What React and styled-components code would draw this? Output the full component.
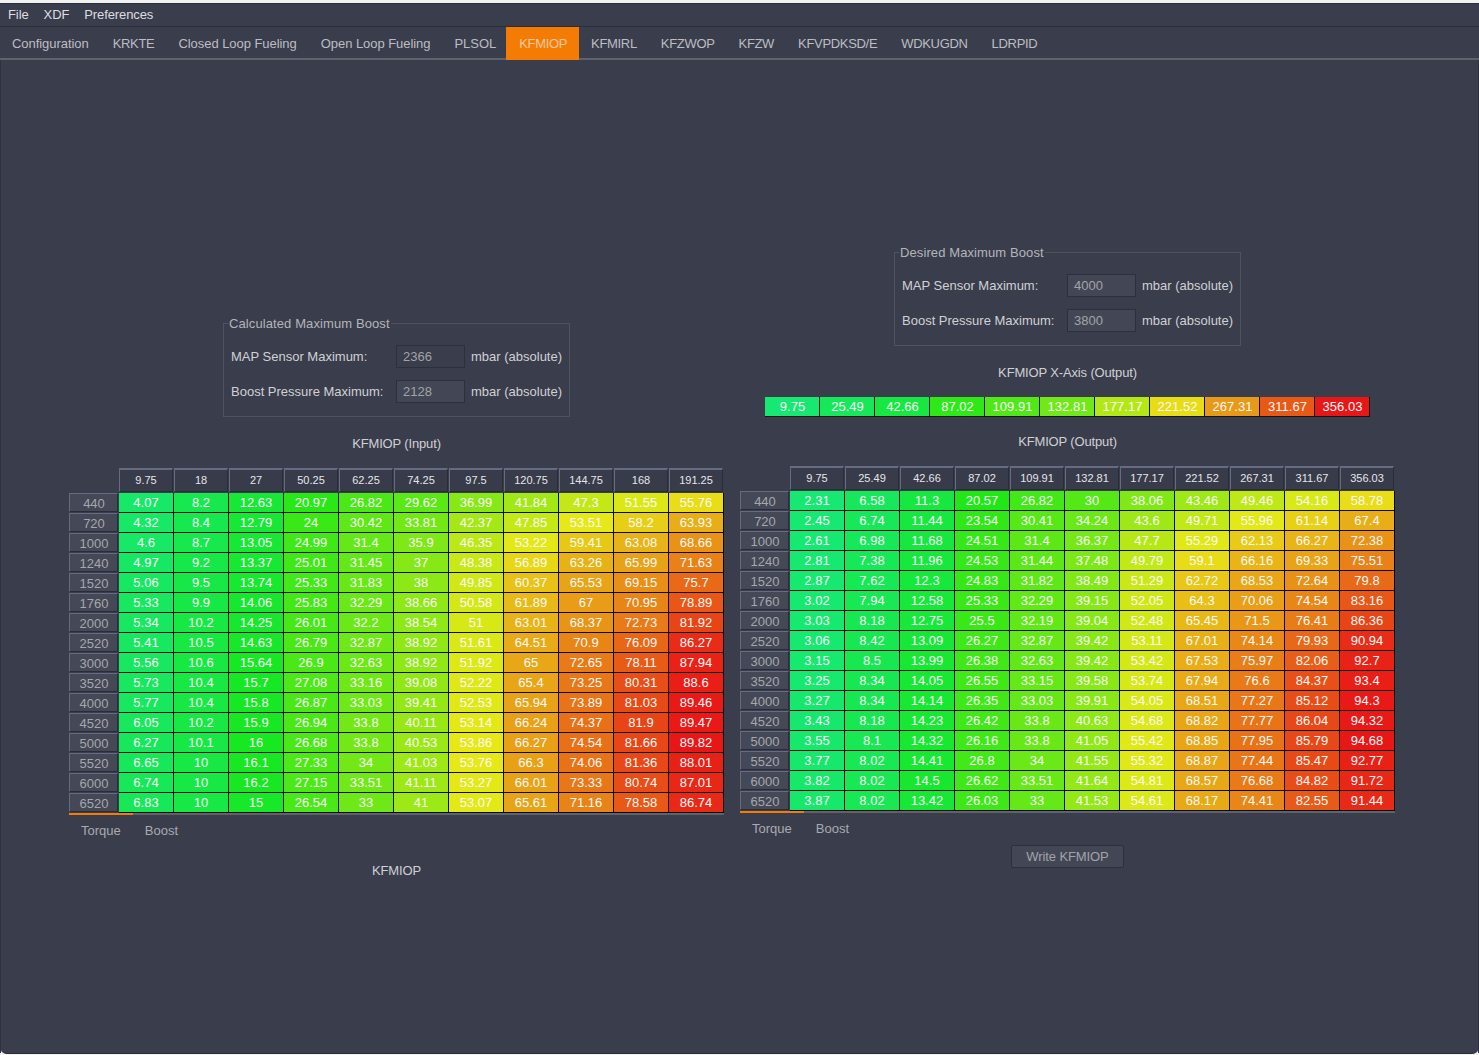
import React from "react";
import styled, { createGlobalStyle } from "styled-components";

const Global = createGlobalStyle`
  html, body { margin: 0; padding: 0; background: #f0f2f2; }
  body { font-family: "Liberation Sans", Arial, sans-serif; font-size: 13px; }
`;

const Window = styled.div`
  width: 1479px;
  height: 1055px;
  box-sizing: border-box;
  padding-top: 3px;
  overflow: hidden;
`;
const Frame = styled.div`
  height: 1050px;
  background: #3a3d4c;
  border-radius: 0 0 7px 7px;
  border-bottom: 1px solid #2b2d3a;
  display: flex;
  flex-direction: column;
`;
const MenuBar = styled.div`
  height: 23px;
  display: flex;
  align-items: center;
  gap: 15px;
  padding-left: 8px;
  color: #dddde0;
  letter-spacing: -0.1px;
  border-bottom: 1px solid #2c2e3b;
  box-shadow: inset 0 1px 0 #2c2e3b;
`;
const TabBar = styled.div`
  height: 31px;
  display: flex;
  border-bottom: 2px solid #5f6269;
`;
const Tab = styled.div`
  padding: ${p => (p.$active ? "0 12px 0 13px" : "1px 12px 0")};
  display: flex;
  align-items: center;
  color: ${p => (p.$active ? "#f4c9a0" : "#bcbdc2")};
  background: ${p => (p.$active ? "#f57c04" : "transparent")};
  letter-spacing: ${p => (p.$tight ? "-0.32px" : "-0.05px")};
  margin: ${p => (p.$active ? "0 0 -2px -2px" : "0")};
  height: ${p => (p.$active ? "33px" : "auto")};
`;
const Content = styled.div`
  flex: 1;
  display: flex;
  gap: 16px;
  padding-left: 68px;
  border-left: 1px solid #2f3140;
  border-right: 1px solid #2f3140;
  box-sizing: border-box;
`;
const Column = styled.div`
  width: 655px;
  padding-top: ${p => p.$top}px;
  display: flex;
  flex-direction: column;
  align-items: center;
`;
const Group = styled.fieldset`
  margin: -7px 0 0;
  padding: 14px 6px 14px;
  width: 347px;
  box-sizing: border-box;
  height: 101px;
  border: 1px solid #50535c;
  display: flex;
  flex-direction: column;
  gap: 12px;
  min-inline-size: 0;
`;
const Legend = styled.legend`
  padding: 0 1px;
  margin-left: -2px;
  color: #b4b5ba;
  line-height: 15px;
  letter-spacing: 0.1px;
`;
const FieldRow = styled.div`
  display: flex;
  align-items: center;
  height: 23px;
  padding-left: 1px;
`;
const FieldLabel = styled.span`
  width: 165px;
  color: #d0d1d5;
`;
const ValueBox = styled.div`
  width: 69px;
  height: 23px;
  box-sizing: border-box;
  border: 1px solid #2d2f3d;
  background: ${p => (p.$light ? "#434755" : "#3a3d4c")};
  color: #a2a3a9;
  padding-left: 6px;
  line-height: 21px;
`;
const Unit = styled.span`
  margin-left: 6px;
  color: #d0d1d5;
  white-space: nowrap;
`;
const Title = styled.div`
  color: #cfd0d4;
  line-height: 15px;
  letter-spacing: -0.15px;
  margin-top: ${p => p.$mt}px;
`;
const AxisRow = styled.div`
  margin-top: ${p => p.$mt}px;
  display: grid;
  grid-template-columns: repeat(11, 55px);
  height: 20px;
  box-sizing: border-box;
  border-bottom: 1px solid #14151b;
  width: 605px;
`;
const Grid = styled.div`
  margin-top: ${p => p.$mt}px;
  display: grid;
  grid-template-columns: 50px repeat(11, 55px);
  grid-auto-rows: 20px;
  grid-template-rows: 25px;
  width: 655px;
`;
const Corner = styled.div``;
const HeadCell = styled.div`
  margin-right: 1px;
  margin-bottom: 1px;
  box-sizing: border-box;
  background: #383b4a;
  border: 1px solid #2a2c38;
  border-top: 2px solid #666a83;
  border-left: 1px solid #666a83;
  color: #e6e6ea;
  font-size: 11px;
  padding-bottom: 2px;
  display: flex;
  align-items: center;
  justify-content: center;
`;
const RowHead = styled.div`
  margin-right: 1px;
  margin-bottom: 1px;
  box-sizing: border-box;
  background: #444857;
  border: 1px solid #2a2c38;
  border-top: 1px solid #666a83;
  border-left: 1px solid #666a83;
  color: #a6a7ad;
  display: flex;
  align-items: center;
  justify-content: center;
  padding-top: 2px;
  padding-left: 1px;
  line-height: 15px;
`;
const Cell = styled.div`
  box-sizing: border-box;
  border-right: 1px solid #0a0a0a;
  border-bottom: 1px solid #0a0a0a;
  color: #fafafa;
  display: flex;
  align-items: center;
  justify-content: center;
  padding-bottom: 1px;
  line-height: 15px;
`;
const AxisCell = styled(Cell)`
  border-bottom: 0;
  padding-bottom: 0;
  padding-left: 1px;
`;
const TabStrip = styled.div`
  width: 655px;
  position: relative;
  border-top: 2px solid #5f6269;
  height: 31px;
  display: flex;
  align-items: center;
  color: #a9aab0;
`;
const Indicator = styled.div`
  position: absolute;
  top: -2px;
  left: 0;
  width: 64px;
  height: 2px;
  background: #f57c04;
`;
const SubTab = styled.span`
  margin-left: ${p => p.$ml}px;
`;
const WriteButton = styled.button`
  margin-top: 1px;
  width: 113px;
  height: 23px;
  padding: 0;
  background: #434755;
  border: 1px solid #2d2f3d;
  border-radius: 2px;
  color: #a2a3a9;
  font: inherit;
  letter-spacing: -0.1px;
`;

const rpm = [440, 720, 1000, 1240, 1520, 1760, 2000, 2520, 3000, 3520, 4000, 4520, 5000, 5520, 6000, 6520];
const inputHead = ["9.75", "18", "27", "50.25", "62.25", "74.25", "97.5", "120.75", "144.75", "168", "191.25"];
const outputHead = ["9.75", "25.49", "42.66", "87.02", "109.91", "132.81", "177.17", "221.52", "267.31", "311.67", "356.03"];
const inputData = [
  [4.07, 8.2, 12.63, 20.97, 26.82, 29.62, 36.99, 41.84, 47.3, 51.55, 55.76],
  [4.32, 8.4, 12.79, 24, 30.42, 33.81, 42.37, 47.85, 53.51, 58.2, 63.93],
  [4.6, 8.7, 13.05, 24.99, 31.4, 35.9, 46.35, 53.22, 59.41, 63.08, 68.66],
  [4.97, 9.2, 13.37, 25.01, 31.45, 37, 48.38, 56.89, 63.26, 65.99, 71.63],
  [5.06, 9.5, 13.74, 25.33, 31.83, 38, 49.85, 60.37, 65.53, 69.15, 75.7],
  [5.33, 9.9, 14.06, 25.83, 32.29, 38.66, 50.58, 61.89, 67, 70.95, 78.89],
  [5.34, 10.2, 14.25, 26.01, 32.2, 38.54, 51, 63.01, 68.37, 72.73, 81.92],
  [5.41, 10.5, 14.63, 26.79, 32.87, 38.92, 51.61, 64.51, 70.9, 76.09, 86.27],
  [5.56, 10.6, 15.64, 26.9, 32.63, 38.92, 51.92, 65, 72.65, 78.11, 87.94],
  [5.73, 10.4, 15.7, 27.08, 33.16, 39.08, 52.22, 65.4, 73.25, 80.31, 88.6],
  [5.77, 10.4, 15.8, 26.87, 33.03, 39.41, 52.53, 65.94, 73.89, 81.03, 89.46],
  [6.05, 10.2, 15.9, 26.94, 33.8, 40.11, 53.14, 66.24, 74.37, 81.9, 89.47],
  [6.27, 10.1, 16, 26.68, 33.8, 40.53, 53.86, 66.27, 74.54, 81.66, 89.82],
  [6.65, 10, 16.1, 27.33, 34, 41.03, 53.76, 66.3, 74.06, 81.36, 88.01],
  [6.74, 10, 16.2, 27.15, 33.51, 41.11, 53.27, 66.01, 73.33, 80.74, 87.01],
  [6.83, 10, 15, 26.54, 33, 41, 53.07, 65.61, 71.16, 78.58, 86.74],
];
const outputData = [
  [2.31, 6.58, 11.3, 20.57, 26.82, 30, 38.06, 43.46, 49.46, 54.16, 58.78],
  [2.45, 6.74, 11.44, 23.54, 30.41, 34.24, 43.6, 49.71, 55.96, 61.14, 67.4],
  [2.61, 6.98, 11.68, 24.51, 31.4, 36.37, 47.7, 55.29, 62.13, 66.27, 72.38],
  [2.81, 7.38, 11.96, 24.53, 31.44, 37.48, 49.79, 59.1, 66.16, 69.33, 75.51],
  [2.87, 7.62, 12.3, 24.83, 31.82, 38.49, 51.29, 62.72, 68.53, 72.64, 79.8],
  [3.02, 7.94, 12.58, 25.33, 32.29, 39.15, 52.05, 64.3, 70.06, 74.54, 83.16],
  [3.03, 8.18, 12.75, 25.5, 32.19, 39.04, 52.48, 65.45, 71.5, 76.41, 86.36],
  [3.06, 8.42, 13.09, 26.27, 32.87, 39.42, 53.11, 67.01, 74.14, 79.93, 90.94],
  [3.15, 8.5, 13.99, 26.38, 32.63, 39.42, 53.42, 67.53, 75.97, 82.06, 92.7],
  [3.25, 8.34, 14.05, 26.55, 33.15, 39.58, 53.74, 67.94, 76.6, 84.37, 93.4],
  [3.27, 8.34, 14.14, 26.35, 33.03, 39.91, 54.05, 68.51, 77.27, 85.12, 94.3],
  [3.43, 8.18, 14.23, 26.42, 33.8, 40.63, 54.68, 68.82, 77.77, 86.04, 94.32],
  [3.55, 8.1, 14.32, 26.16, 33.8, 41.05, 55.42, 68.85, 77.95, 85.79, 94.68],
  [3.77, 8.02, 14.41, 26.8, 34, 41.55, 55.32, 68.87, 77.44, 85.47, 92.77],
  [3.82, 8.02, 14.5, 26.62, 33.51, 41.64, 54.81, 68.57, 76.68, 84.82, 91.72],
  [3.87, 8.02, 13.42, 26.03, 33, 41.53, 54.61, 68.17, 74.41, 82.55, 91.44],
];
const axisOut = [9.75, 25.49, 42.66, 87.02, 109.91, 132.81, 177.17, 221.52, 267.31, 311.67, 356.03];

const heat = (v, max) => `hsl(${150 * (1 - v / max)}, 82%, 50%)`;

const menus = ["File", "XDF", "Preferences"];
const tabs = ["Configuration", "KRKTE", "Closed Loop Fueling", "Open Loop Fueling", "PLSOL", "KFMIOP", "KFMIRL", "KFZWOP", "KFZW", "KFVPDKSD/E", "WDKUGDN", "LDRPID"];
const tightTabs = ["KRKTE", "KFMIOP", "KFMIRL", "KFZWOP", "KFZW", "KFVPDKSD/E", "WDKUGDN", "LDRPID"];

function HeatTable({ head, data, mt }) {
  const max = Math.max(...data.flat());
  return (
    <Grid $mt={mt}>
      <Corner />
      {head.map((h, i) => <HeadCell key={i}>{h}</HeadCell>)}
      {data.map((row, r) => (
        <React.Fragment key={r}>
          <RowHead>{rpm[r]}</RowHead>
          {row.map((v, c) => <Cell key={c} style={{ background: heat(v, max) }}>{v}</Cell>)}
        </React.Fragment>
      ))}
    </Grid>
  );
}

function BoostGroup({ title, map, boost, lightMap }) {
  return (
    <Group>
      <Legend>{title}</Legend>
      <FieldRow><FieldLabel>MAP Sensor Maximum:</FieldLabel><ValueBox $light={lightMap}>{map}</ValueBox><Unit>mbar (absolute)</Unit></FieldRow>
      <FieldRow><FieldLabel>Boost Pressure Maximum:</FieldLabel><ValueBox $light>{boost}</ValueBox><Unit>mbar (absolute)</Unit></FieldRow>
    </Group>
  );
}

function SubTabs() {
  return (
    <TabStrip>
      <Indicator />
      <SubTab $ml={12}>Torque</SubTab>
      <SubTab $ml={24}>Boost</SubTab>
    </TabStrip>
  );
}

export default function App() {
  const axisMax = Math.max(...axisOut);
  return (
    <Window>
      <Global />
      <Frame>
        <MenuBar>{menus.map(m => <span key={m}>{m}</span>)}</MenuBar>
        <TabBar>{tabs.map(t => <Tab key={t} $tight={tightTabs.includes(t)} $active={t === "KFMIOP"}>{t}</Tab>)}</TabBar>
        <Content>
          <Column $top={263}>
            <BoostGroup title="Calculated Maximum Boost" map="2366" boost="2128" />
            <Title $mt={19}>KFMIOP (Input)</Title>
            <HeatTable head={inputHead} data={inputData} mt={17} />
            <SubTabs />
            <Title $mt={17}>KFMIOP</Title>
          </Column>
          <Column $top={192}>
            <BoostGroup title="Desired Maximum Boost" map="4000" boost="3800" lightMap />
            <Title $mt={19}>KFMIOP X-Axis (Output)</Title>
            <AxisRow $mt={17}>
              {axisOut.map(v => <AxisCell key={v} style={{ background: heat(v, axisMax) }}>{v}</AxisCell>)}
            </AxisRow>
            <Title $mt={17}>KFMIOP (Output)</Title>
            <HeatTable head={outputHead} data={outputData} mt={17} />
            <SubTabs />
            <WriteButton>Write KFMIOP</WriteButton>
          </Column>
        </Content>
      </Frame>
    </Window>
  );
}
